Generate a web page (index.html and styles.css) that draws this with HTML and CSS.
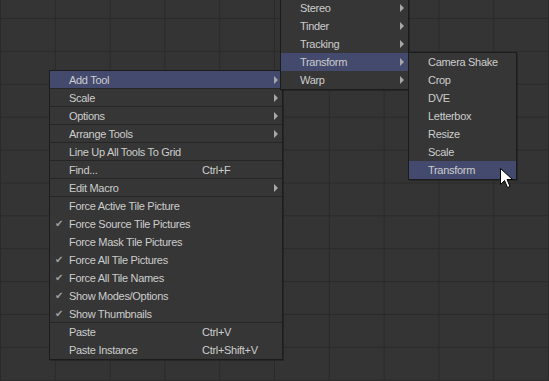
FILE: index.html
```html
<!DOCTYPE html>
<html lang="en">
<head>
<title>Flow context menu</title>
<meta name="viewport" content="width=device-width, initial-scale=1.0">
<link rel="stylesheet" href="styles.css">
</head>
<body>
<div class="flow">

<div class="menu menu-main">
    <div class="item sub sep active">Add Tool</div>
    <div class="item sub sep">Scale</div>
    <div class="item sub sep">Options</div>
    <div class="item sub sep">Arrange Tools</div>
    <div class="item sep">Line Up All Tools To Grid</div>
    <div class="item sep">Find...<span class="key">Ctrl+F</span></div>
    <div class="item sub sep">Edit Macro</div>
    <div class="item">Force Active Tile Picture</div>
    <div class="item checked">Force Source Tile Pictures</div>
    <div class="item">Force Mask Tile Pictures</div>
    <div class="item checked">Force All Tile Pictures</div>
    <div class="item checked">Force All Tile Names</div>
    <div class="item checked">Show Modes/Options</div>
    <div class="item checked sep">Show Thumbnails</div>
    <div class="item">Paste<span class="key">Ctrl+V</span></div>
    <div class="item">Paste Instance<span class="key">Ctrl+Shift+V</span></div>
</div>

<div class="menu menu-tools">
    <div class="item sub">Stereo</div>
    <div class="item sub">Tinder</div>
    <div class="item sub">Tracking</div>
    <div class="item sub active">Transform</div>
    <div class="item sub">Warp</div>
</div>

<div class="menu menu-transform">
    <div class="item">Camera Shake</div>
    <div class="item">Crop</div>
    <div class="item">DVE</div>
    <div class="item">Letterbox</div>
    <div class="item">Resize</div>
    <div class="item">Scale</div>
    <div class="item active">Transform</div>
</div>

<svg class="cursor" width="14" height="22" viewBox="0 0 14 22">
    <path d="M0.5 0.5 L0.5 16.5 L4.5 12.5 L7.5 19.5 L10 18.5 L7 11.5 L12.5 11.5 Z" fill="#fff" stroke="#000" stroke-width="1"/>
</svg>

</div>
</body>
</html>
```

FILE: styles.css
```css
body {
    margin: 0;
    background: #333333;
    font-family: "Liberation Sans", Arial, sans-serif;
    font-size: 11px;
    letter-spacing: -0.3px;
    color: #cdcdcd;
}

.flow {
    position: relative;
    width: 549px;
    height: 381px;
    overflow: hidden;
    background-color: #343434;
    background-image:
        linear-gradient(to right, #2a2a2a 1px, transparent 1px),
        linear-gradient(to bottom, #2a2a2a 1px, transparent 1px);
    background-size: 54.8px 32.9px;
    background-position: 0 18px;
}

.menu {
    position: absolute;
    background: #363636;
    border: 1px solid #1c1c1c;
    box-shadow: 1px 1px 0 rgba(0, 0, 0, 0.25);
}

.menu-main {
    left: 49px;
    top: 70px;
    width: 232px;
}

.menu-tools {
    left: 280px;
    top: -2px;
    width: 127px;
}

.menu-transform {
    left: 408px;
    top: 52px;
    width: 107px;
}

.item {
    position: relative;
    height: 18px;
    line-height: 18px;
    padding-left: 19px;
    white-space: nowrap;
    box-sizing: border-box;
}

.item.sep {
    border-bottom: 1px solid #262626;
}

.item.active {
    background: #434a6d;
}

.item.sub::after {
    content: "";
    position: absolute;
    right: 4px;
    top: 5px;
    border-left: 4px solid #a8a8a8;
    border-top: 4px solid transparent;
    border-bottom: 4px solid transparent;
}

.item.checked::before {
    content: "\2714";
    position: absolute;
    left: 5px;
    top: 0;
    font-family: "DejaVu Sans", sans-serif;
    font-size: 10px;
    color: #a0a0a0;
}

.key {
    position: absolute;
    left: 152px;
}

.cursor {
    position: absolute;
    left: 500px;
    top: 168px;
}
```
